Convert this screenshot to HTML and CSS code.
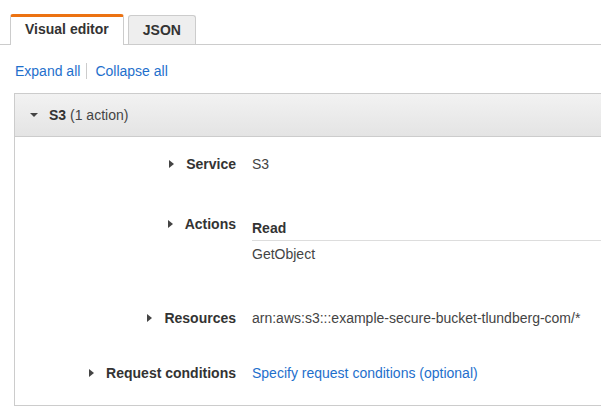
FILE: index.html
```html
<!DOCTYPE html>
<html>
<head>
<meta charset="utf-8">
<link rel="stylesheet" href="styles.css">
</head>
<body>
<div class="tabs">
  <div class="tab tab-active">Visual editor</div>
  <div class="tab">JSON</div>
</div>
<div class="toggles">
  <a class="link">Expand all</a><span class="sep"></span><a class="link">Collapse all</a>
</div>
<div class="panel">
  <div class="panel-head">
    <span class="caret-down"></span><b>S3</b>&nbsp;(1 action)
  </div>
  <div class="panel-body">
    <div class="row row-service">
      <div class="label"><span class="caret-right"></span>Service</div>
      <div class="value">S3</div>
    </div>
    <div class="row row-actions">
      <div class="label"><span class="caret-right"></span>Actions</div>
      <div class="value">
        <div class="group-title">Read</div>
        <div class="group-item">GetObject</div>
      </div>
    </div>
    <div class="row row-resources">
      <div class="label"><span class="caret-right"></span>Resources</div>
      <div class="value">arn:aws:s3:::example-secure-bucket-tlundberg-com/*</div>
    </div>
    <div class="row row-conditions">
      <div class="label"><span class="caret-right"></span>Request conditions</div>
      <div class="value"><a class="link">Specify request conditions (optional)</a></div>
    </div>
  </div>
</div>
</body>
</html>
```
FILE: styles.css
```css
html, body {
  margin: 0;
  padding: 0;
  overflow: hidden;
  background: #fff;
}
body {
  font-family: Arial, "Liberation Sans", sans-serif;
  font-size: 14px;
  line-height: 20px;
  color: #444;
}
.tabs {
  display: flex;
  align-items: flex-end;
  margin-top: 14px;
  padding-left: 10px;
  border-bottom: 1px solid #ccc;
}
.tab {
  height: 28px;
  line-height: 28px;
  padding: 0 14px;
  border: 1px solid #ccc;
  border-bottom: none;
  border-radius: 3px 3px 0 0;
  background: #eee;
  font-weight: bold;
  color: #333;
  margin-left: 4px;
}
.tab-active {
  margin-left: 0;
  background: #fff;
  border-top: 3px solid #ec7211;
  margin-bottom: -1px;
  height: 28px;
  line-height: 25px;
}
.toggles {
  display: flex;
  align-items: center;
  padding: 16px 0 0 15px;
  margin-bottom: 12px;
}
.link {
  color: #1e6fcc;
  text-decoration: none;
}
.sep {
  display: inline-block;
  width: 0;
  height: 16px;
  border-left: 1px solid #ccc;
  margin: 0 8px 0 6px;
}
.panel {
  margin-left: 14px;
  margin-right: -20px;
  border: 1px solid #ccc;
}
.panel-head {
  height: 42px;
  display: flex;
  align-items: center;
  padding-left: 15px;
  background: linear-gradient(#f2f2f2, #e4e4e4);
  border-bottom: 1px solid #ccc;
  color: #444;
}
.panel-head b {
  color: #333;
}
.caret-down {
  width: 0;
  height: 0;
  border-left: 4px solid transparent;
  border-right: 4px solid transparent;
  border-top: 4px solid #444;
  margin-right: 11px;
}
.panel-body {
  padding: 17px 0 22px;
}
.row {
  display: grid;
  grid-template-columns: 221px 1fr;
  column-gap: 16px;
}
.row-actions { margin-top: 40px; }
.row-resources { margin-top: 44px; }
.row-conditions { margin-top: 35px; }
.label {
  display: flex;
  align-items: center;
  justify-content: flex-end;
  height: 20px;
  font-weight: bold;
  color: #333;
}
.caret-right {
  width: 0;
  height: 0;
  border-top: 4px solid transparent;
  border-bottom: 4px solid transparent;
  border-left: 5px solid #444;
  margin-right: 12px;
}
.value {
  color: #444;
}
.group-title {
  font-weight: bold;
  color: #333;
  padding: 4px 0 2px;
  border-bottom: 1px solid #ddd;
}
.group-item {
  margin-top: 3px;
}
```
